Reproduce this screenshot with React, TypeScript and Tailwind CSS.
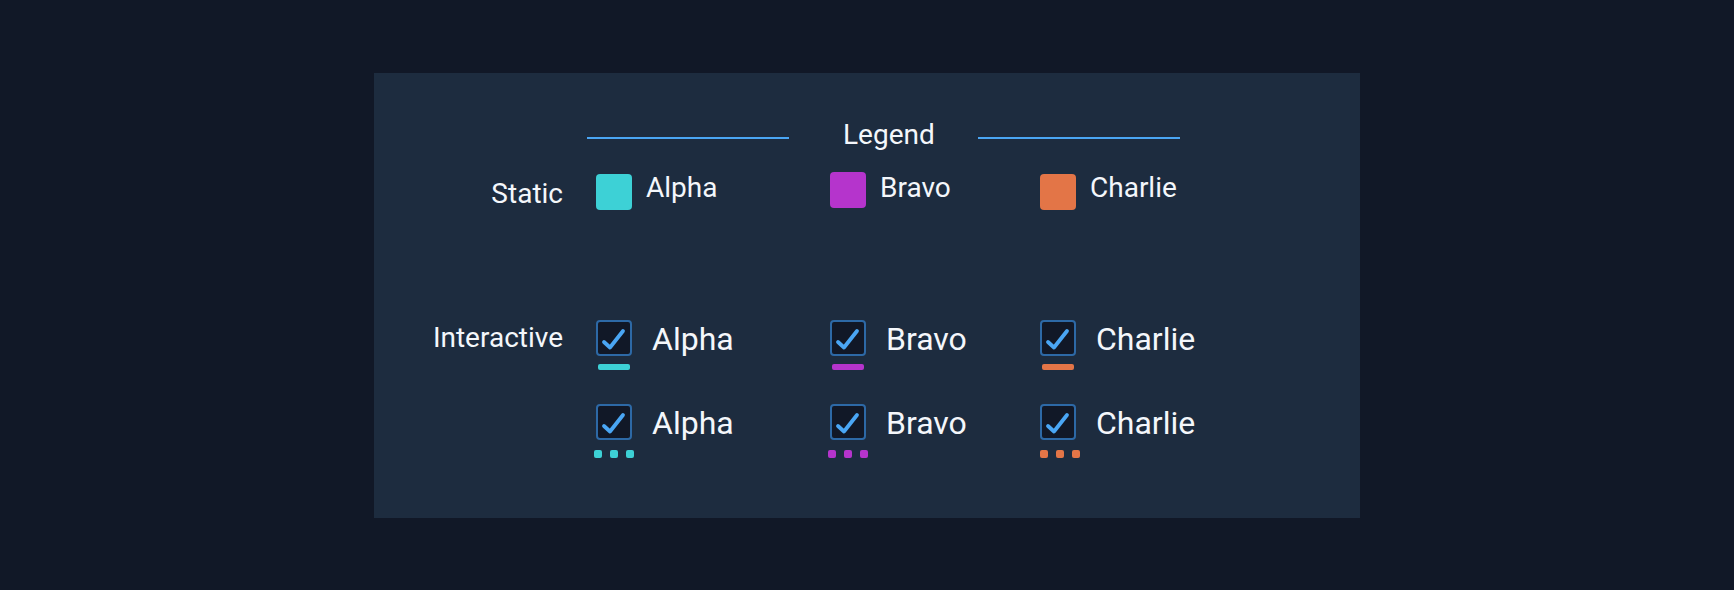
import React from 'react';

type Series = {
  name: string;
  color: string;
  colWidth: string;
  swatchShift?: string;
  dotShift?: string;
};

const series: Series[] = [
  { name: 'Alpha', color: 'bg-[#3dd1d6]', colWidth: 'w-[234px]' },
  { name: 'Bravo', color: 'bg-[#b534cc]', colWidth: 'w-[210px]', swatchShift: '-mt-[2px]' },
  { name: 'Charlie', color: 'bg-[#e37547]', colWidth: 'w-[180px]', dotShift: 'ml-[4px]' },
];

const CheckBox: React.FC = () => (
  <div className="w-[36px] h-[36px] rounded-[4px] border-2 border-[#2d69a6] bg-[#111827] relative">
    <svg className="absolute -left-[2px] -top-[2px]" width="36" height="36" viewBox="0 0 36 36">
      <path
        d="M8 22 L14 27.5 L27 11"
        fill="none"
        stroke="#4aa6f4"
        strokeWidth="3.8"
        strokeLinecap="round"
        strokeLinejoin="round"
      />
    </svg>
  </div>
);

const InteractiveItem: React.FC<{ item: Series; dotted?: boolean }> = ({ item, dotted }) => (
  <div className={`${item.colWidth} flex items-start`}>
    <div className="w-[36px] flex flex-col items-center">
      <CheckBox />
      {dotted ? (
        <div className={`mt-[10px] flex gap-[8px] ${item.dotShift ?? ''}`}>
          <div className={`w-[8px] h-[8px] rounded-[2px] ${item.color}`} />
          <div className={`w-[8px] h-[8px] rounded-[2px] ${item.color}`} />
          <div className={`w-[8px] h-[8px] rounded-[2px] ${item.color}`} />
        </div>
      ) : (
        <div className={`mt-[8px] w-[32px] h-[6px] rounded-[2px] ${item.color}`} />
      )}
    </div>
    <span className="ml-[20px] text-[32px] leading-[38px]">{item.name}</span>
  </div>
);

export default function App() {
  return (
    <div
      className="h-screen w-full bg-[#111827] flex items-center justify-center text-[#f4f7fb]"
      style={{ fontFamily: 'Roboto, "Noto Sans", sans-serif' }}
    >
      <div className="w-[986px] h-[445px] bg-[#1d2c3f] pt-[47px] flex flex-col">
        {/* legend title */}
        <div className="ml-[213px] flex items-start">
          <div className="mt-[17px] w-[202px] h-[2px] bg-[#4aa6f4]" />
          <span className="ml-[54px] mt-[1px] text-[28px] leading-[28px]">Legend</span>
          <div className="ml-[43px] mt-[17px] w-[202px] h-[2px] bg-[#4aa6f4]" />
        </div>

        {/* static row */}
        <div className="mt-[25px] flex items-start">
          <div className="w-[189px] mr-[33px] mt-[6px] text-right text-[28px] leading-[28px]">Static</div>
          {series.map(item => (
            <div key={item.name} className={`${item.colWidth} flex items-start`}>
              <div className={`w-[36px] h-[36px] rounded-[4px] ${item.color} ${item.swatchShift ?? ''}`} />
              <span className="ml-[14px] text-[28px] leading-[28px]">{item.name}</span>
            </div>
          ))}
        </div>

        {/* interactive rows */}
        <div className="mt-[110px] flex items-start">
          <div className="w-[189px] mr-[33px] mt-[4px] text-right text-[28px] leading-[28px]">Interactive</div>
          {series.map(item => (
            <InteractiveItem key={item.name} item={item} />
          ))}
        </div>
        <div className="mt-[34px] flex items-start">
          <div className="w-[189px] mr-[33px]" />
          {series.map(item => (
            <InteractiveItem key={item.name} item={item} dotted />
          ))}
        </div>
      </div>
    </div>
  );
}
